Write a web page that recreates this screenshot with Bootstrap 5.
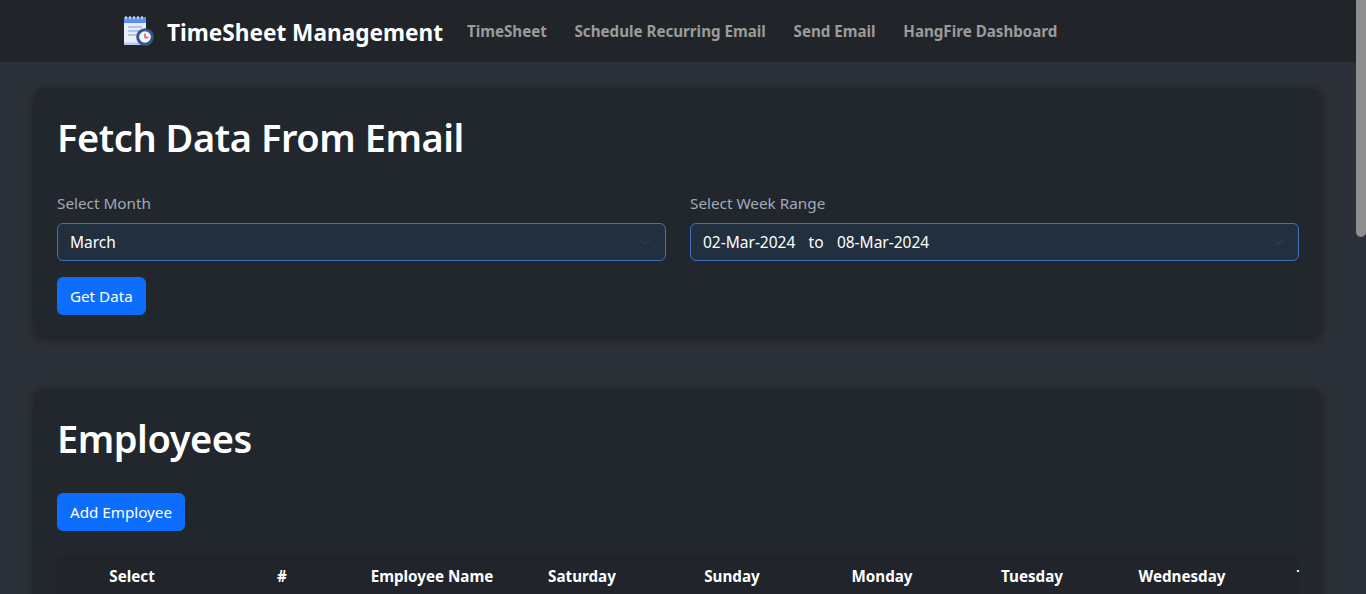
<!DOCTYPE html>
<html lang="en">
<head>
    <meta charset="UTF-8">
    <meta name="viewport" content="width=device-width, initial-scale=1.0">
    <title>TimeSheet Management</title>
    <link href="https://cdn.jsdelivr.net/npm/bootstrap@5.3.0/dist/css/bootstrap.min.css" rel="stylesheet">
    <style>
        body {
            background-color: #2c3139;
            color: #fff;
            font-family: "Noto Sans", "Liberation Sans", sans-serif;
        }

        .scroll-thumb {
            position: fixed;
            top: 0;
            right: 0;
            width: 10px;
            height: 237px;
            background: #8f8f8f;
            border-radius: 0 0 5px 5px;
        }

        .top-bar {
            background-color: #212529;
            height: 62px;
            padding: 0 0 0 124px;
        }

        .top-bar .navbar-brand {
            color: #fff;
            font-size: 22.6px;
            font-weight: 700;
            padding: 0;
            margin-right: 24px;
            gap: 13px;
        }

        .brand-text { padding-top: 3px; }

        .top-bar .navbar-nav { gap: 27.7px; }

        .top-bar .navbar-nav .nav-link {
            color: #9b9b9b;
            font-size: 15.15px;
            font-weight: 700;
            padding: 0;
        }

        .page-wrap { padding: 27px 45px 0 35px; }

        .panel {
            background-color: #22262d;
            border-radius: 8px;
            padding: 24px 22px 21px;
            box-shadow: 0 2px 12px rgba(0, 0, 0, 0.45);
            margin-bottom: 54px;
        }

        .panel h1 {
            font-size: 38px;
            font-weight: 600;
            letter-spacing: -0.45px;
            line-height: 48px;
            margin-bottom: 30px;
        }

        .panel h1.emp-title { margin-bottom: 31px; }

        .panel label {
            color: #a0abbb;
            font-size: 15.3px;
            line-height: 24px;
            margin-bottom: 8px;
        }

        .panel .form-select {
            background-color: #222f3e;
            border-color: #3d72bd;
            color: #fff;
            font-size: 15.5px;
            word-spacing: 0.4px;
            height: 38px;
            padding-top: 7px;
            padding-bottom: 5px;
        }

        .panel .btn { font-size: 15.2px; line-height: 24px; }

        .panel-long { min-height: 1000px; }

        .emp-table { width: 1500px; table-layout: fixed; margin-top: 25px; }

        .emp-table th {
            background: #21242b;
            color: #fff;
            border: 0;
            width: 150px;
            font-size: 15.2px;
            font-weight: 700;
            line-height: 24px;
            text-align: center;
            padding: 8px;
        }
    </style>
</head>
<body>
    <nav class="navbar navbar-expand top-bar">
        <a class="navbar-brand d-flex align-items-center" href="#">
            <svg width="30" height="30" viewBox="0 0 30 30">
                <rect x="0" y="1" width="22" height="28" rx="1.5" fill="#e9eefb"/>
                <rect x="0" y="1" width="22" height="6" rx="1" fill="#5b8def"/>
                <rect x="0" y="26.5" width="22" height="2.5" rx="1" fill="#b9c8ee"/>
                <path d="M2 0v3.5M6 0v3.5M10 0v3.5M14 0v3.5M18 0v3.5" stroke="#dfe6f5" stroke-width="1.2"/>
                <path d="M4 11h14M4 15h14M4 19h8" stroke="#9db8e8" stroke-width="1.4"/>
                <circle cx="21" cy="21" r="8.8" fill="#35558f"/>
                <circle cx="21" cy="21" r="5.8" fill="#f4f6fc"/>
                <path d="M21 17.5V21.5H24.5" stroke="#e0574f" stroke-width="1.5" fill="none"/>
            </svg>
            <span class="brand-text">TimeSheet Management</span>
        </a>
        <ul class="navbar-nav">
            <li class="nav-item"><a class="nav-link" href="#">TimeSheet</a></li>
            <li class="nav-item"><a class="nav-link" href="#">Schedule Recurring Email</a></li>
            <li class="nav-item"><a class="nav-link" href="#">Send Email</a></li>
            <li class="nav-item"><a class="nav-link" href="#">HangFire Dashboard</a></li>
        </ul>
    </nav>

    <div class="page-wrap">
        <section class="panel">
            <h1>Fetch Data From Email</h1>
            <div class="row gx-4">
                <div class="col-6">
                    <label class="d-block" for="monthPick">Select Month</label>
                    <select class="form-select" id="monthPick"><option>March</option></select>
                </div>
                <div class="col-6">
                    <label class="d-block" for="weekPick">Select Week Range</label>
                    <select class="form-select" id="weekPick"><option>02-Mar-2024&nbsp;&nbsp;&nbsp;to&nbsp;&nbsp;&nbsp;08-Mar-2024</option></select>
                </div>
            </div>
            <button class="btn btn-primary mt-3" type="button">Get Data</button>
        </section>

        <section class="panel panel-long">
            <h1 class="emp-title">Employees</h1>
            <button class="btn btn-primary" type="button">Add Employee</button>
            <div class="table-responsive">
                <table class="table emp-table">
                    <thead>
                        <tr>
                            <th>Select</th>
                            <th>#</th>
                            <th>Employee Name</th>
                            <th>Saturday</th>
                            <th>Sunday</th>
                            <th>Monday</th>
                            <th>Tuesday</th>
                            <th>Wednesday</th>
                            <th>Thursday</th>
                            <th>Friday</th>
                        </tr>
                    </thead>
                </table>
            </div>
        </section>
    </div>
    <div class="scroll-thumb" aria-hidden="true"></div>
    <script src="https://cdn.jsdelivr.net/npm/bootstrap@5.3.0/dist/js/bootstrap.bundle.min.js"></script>
</body>
</html>
